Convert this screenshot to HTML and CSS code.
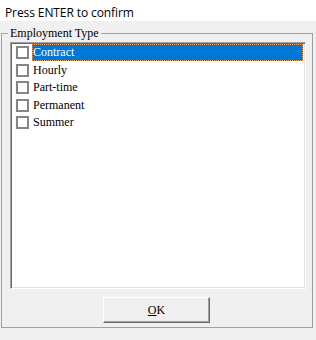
FILE: index.html
```html
<!DOCTYPE html>
<html>
<head>
<meta charset="utf-8">
<link rel="stylesheet" href="styles.css">
</head>
<body>
<div class="title">Press ENTER to confirm</div>
<fieldset class="group">
  <legend class="legend">Employment Type</legend>
  <div class="listbox">
    <div class="row selected"><span class="check"></span><span class="label">Contract</span></div>
    <div class="row"><span class="check"></span><span class="label">Hourly</span></div>
    <div class="row"><span class="check"></span><span class="label">Part-time</span></div>
    <div class="row"><span class="check"></span><span class="label">Permanent</span></div>
    <div class="row"><span class="check"></span><span class="label">Summer</span></div>
  </div>
  <div class="actions">
    <button class="btn" type="button"><span class="ul">O</span>K</button>
  </div>
</fieldset>
</body>
</html>
```
FILE: styles.css
```css
html, body {
  margin: 0;
  padding: 0;
}
body {
  width: 316px;
  height: 340px;
  overflow: hidden;
  background: #f0f0f0;
  font-family: "Liberation Serif", "Times New Roman", serif;
  font-size: 12px;
  color: #000;
}
.title {
  height: 18px;
  padding: 3px 0 0 5px;
  background: #fff;
  font-family: "Open Sans", "Liberation Sans", sans-serif;
  font-size: 12px;
  letter-spacing: -0.1px;
  line-height: 20px;
  white-space: nowrap;
}
.group {
  margin: 5px 0 0 1px;
  width: 312px;
  height: 302px;
  box-sizing: border-box;
  padding: 0;
  border: 1px solid #a0a0a0;
  min-width: 0;
}
.legend {
  margin-left: 6px;
  padding: 0 2px;
  line-height: 14px;
  font-size: 12px;
}
.listbox {
  margin: 2px 0 0 8px;
  width: 296px;
  height: 247px;
  box-sizing: border-box;
  background: #fff;
  border: 1px solid;
  border-color: #a0a0a0 #fff #fff #a0a0a0;
  box-shadow: inset 1px 1px 0 #696969, inset -1px -1px 0 #e3e3e3;
  padding: 1px 2px 2px 2px;
}
.row {
  display: flex;
  align-items: center;
  height: 17.5px;
}
.check {
  flex: none;
  width: 13px;
  height: 13px;
  box-sizing: border-box;
  border: 2px solid #858585;
  background: #fff;
  margin-left: 3px;
  margin-right: 3px;
}
.label {
  flex: 1;
  height: 17px;
  line-height: 17px;
  padding-left: 1px;
  box-sizing: border-box;
  white-space: nowrap;
}
.selected .label {
  background: #0078d7;
  color: #fff;
  outline: 1px dotted #e8a060;
  outline-offset: -1px;
}
.actions {
  display: flex;
  margin: 8px 0 0 101px;
}
.btn {
  width: 107px;
  height: 26px;
  box-sizing: border-box;
  margin: 0;
  padding: 0;
  background: #f0f0f0;
  border: 1px solid;
  border-color: #fff #696969 #696969 #fff;
  box-shadow: inset -1px -1px 0 #a0a0a0;
  font-family: "Liberation Serif", "Times New Roman", serif;
  font-size: 12px;
  color: #000;
}
.ul {
  text-decoration: underline;
}
```
